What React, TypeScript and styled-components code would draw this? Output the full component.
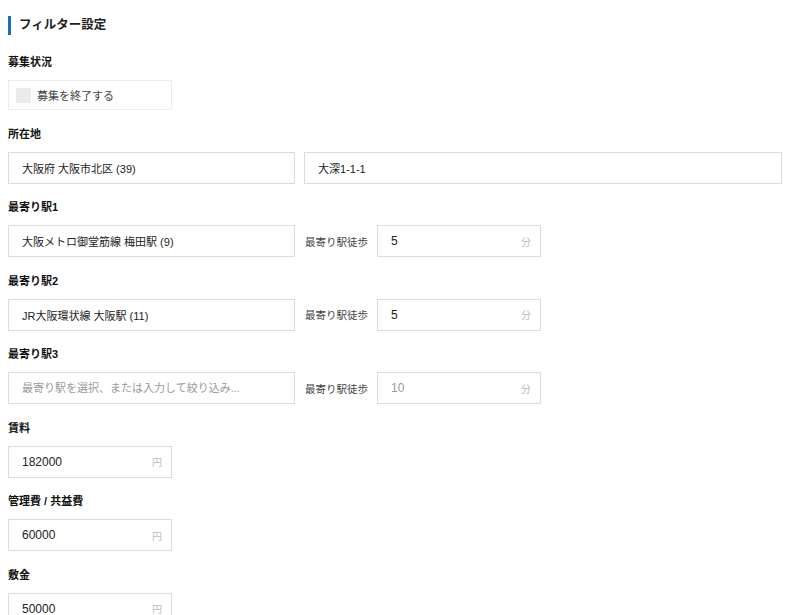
import React from "react";
import styled, {createGlobalStyle} from "styled-components";

const GlobalStyle = createGlobalStyle`
  body {
    margin: 0;
    background: #fff;
    font-family: "Liberation Sans", "Noto Sans CJK JP", sans-serif;
    color: #222;
  }
`;

interface Station {
    label: string;
    name: string;
    walk: string;
}

const stations: Station[] = [
    {label: "最寄り駅1", name: "大阪メトロ御堂筋線 梅田駅 (9)", walk: "5"},
    {label: "最寄り駅2", name: "JR大阪環状線 大阪駅 (11)", walk: "5"},
    {label: "最寄り駅3", name: "", walk: ""},
];

const prices = [
    {label: "賃料", value: "182000"},
    {label: "管理費 / 共益費", value: "60000"},
    {label: "敷金", value: "50000"},
];

function UnitInput({value, placeholder, unit}: {value: string; placeholder?: string; unit: string}) {
    return (
        <UnitBox>
            <UnitField readOnly value={value} placeholder={placeholder}/>
            <Unit>{unit}</Unit>
        </UnitBox>
    );
}

export default function App() {
    return (
        <Page>
            <GlobalStyle/>
            <Title>フィルター設定</Title>

            <Field>
                <Label>募集状況</Label>
                <CheckBox>
                    <Check/>
                    <CheckText>募集を終了する</CheckText>
                </CheckBox>
            </Field>

            <Field>
                <Label>所在地</Label>
                <Row>
                    <TextBox readOnly value="大阪府 大阪市北区 (39)"/>
                    <TextBox readOnly value="大深1-1-1" $grow/>
                </Row>
            </Field>

            {stations.map(s => (
                <Field key={s.label}>
                    <Label>{s.label}</Label>
                    <Row>
                        <TextBox readOnly value={s.name} placeholder="最寄り駅を選択、または入力して絞り込み..."/>
                        <WalkLabel>最寄り駅徒歩</WalkLabel>
                        <UnitInput value={s.walk} placeholder="10" unit="分"/>
                    </Row>
                </Field>
            ))}

            {prices.map(p => (
                <Field key={p.label}>
                    <Label>{p.label}</Label>
                    <UnitInput value={p.value} unit="円"/>
                </Field>
            ))}
        </Page>
    );
}

const Page = styled.div`
  padding: 16px 8px 0;
  height: 615px;
  box-sizing: border-box;
  overflow: hidden;
`;

const Title = styled.h2`
  margin: 0 0 19px;
  padding-left: 8px;
  border-left: 3px solid #1c6db3;
  font-size: 12.5px;
  font-weight: 700;
  line-height: 19px;
  color: #222;
`;

const Field = styled.div`
  margin-bottom: 15.5px;
`;

const Label = styled.div`
  font-size: 11px;
  font-weight: 700;
  line-height: 16px;
  margin-bottom: 10px;
  color: #111;
`;

const Row = styled.div`
  display: flex;
  align-items: center;
`;

const TextBox = styled.input<{ $grow?: boolean }>`
  box-sizing: border-box;
  width: 287px;
  height: 32px;
  margin-right: ${p => p.$grow ? "0" : "9px"};
  flex: ${p => p.$grow ? "1" : "none"};
  padding: 0 13px;
  border: 1px solid #dcdcdc;
  border-radius: 0;
  background: #fff;
  font-family: inherit;
  font-size: 11px;
  color: #222;
  outline: none;

  &::placeholder {
    color: #9a9a9a;
  }
`;

const WalkLabel = styled.span`
  font-size: 10.5px;
  color: #444;
  margin: 0 9px 0 1px;
  white-space: nowrap;
`;

const UnitBox = styled.div`
  box-sizing: border-box;
  display: flex;
  align-items: center;
  width: 164px;
  height: 32px;
  border: 1px solid #dcdcdc;
  padding: 0 9px 0 13px;
`;

const UnitField = styled.input`
  flex: 1;
  min-width: 0;
  border: none;
  padding: 0;
  outline: none;
  font-family: inherit;
  font-size: 12px;
  color: #222;
  background: transparent;

  &::placeholder {
    color: #9a9a9a;
  }
`;

const Unit = styled.span`
  font-size: 10px;
  color: #bbb;
`;

const CheckBox = styled.label`
  box-sizing: border-box;
  display: flex;
  align-items: center;
  width: 164px;
  height: 30px;
  padding: 0 7px;
  border: 1px solid #ececec;
`;

const Check = styled.span`
  width: 15px;
  height: 15px;
  background: #ebebeb;
  margin-right: 6px;
`;

const CheckText = styled.span`
  font-size: 11px;
  color: #444;
`;
